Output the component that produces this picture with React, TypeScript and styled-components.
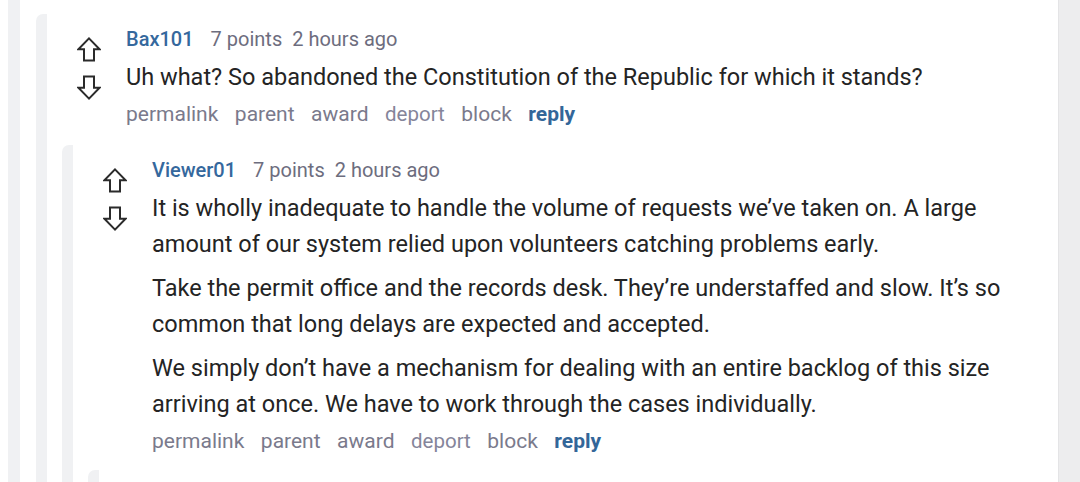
import styled, { createGlobalStyle } from "styled-components";
import type { ReactNode } from "react";

const GlobalStyle = createGlobalStyle`
  html, body {
    margin: 0;
    padding: 0;
    background: #ededee;
    font-family: Roboto, "Liberation Sans", Arial, sans-serif;
  }
  * { box-sizing: border-box; }
`;

const Panel = styled.div`
  width: 1059px;
  height: 482px;
  overflow: hidden;
  background: #ffffff;
  border-right: 1px solid #e4e4e6;
  padding: 0 34px 0 8px;
  display: flex;
`;

const Rail = styled.div<{ $width: number; $round?: boolean }>`
  flex: 0 0 ${(p) => p.$width}px;
  background: #f0f1f3;
  border-top-left-radius: ${(p) => (p.$round ? "7px" : "0")};
`;

const ThreadBody = styled.div`
  flex: 1;
  padding-left: 16px;
  padding-top: 14px;
`;

const CommentBox = styled.div<{ $top: number }>`
  display: flex;
  margin-top: ${(p) => p.$top}px;
`;

const CommentInner = styled.div`
  flex: 1;
  padding-left: 15px;
  padding-bottom: 16px;
`;

// a nested reply below the fold: only its rail shows
const ReplyStub = styled.div`
  flex: 1;
  height: 60px;
`;

const CommentRow = styled.div`
  display: flex;
  padding-left: 15px;
  padding-top: 12px;
`;

const Votes = styled.div`
  flex: 0 0 24px;
  margin-right: 25px;
  padding-top: 11px;
  display: flex;
  flex-direction: column;
  align-items: center;
  gap: 13px;
  color: #2b2b2b;
`;

const CommentMain = styled.div`
  flex: 1;
  min-width: 0;
`;

const Header = styled.div`
  display: flex;
  align-items: baseline;
  font-size: 20px;
  line-height: 26px;
  margin-bottom: 7px;
`;

const Author = styled.a`
  color: #35689d;
  font-weight: 500;
  margin-right: 17px;
`;

const Meta = styled.span<{ $gap?: number }>`
  color: #6d6d7e;
  margin-right: ${(p) => p.$gap ?? 0}px;
`;

const Body = styled.div`
  font-size: 23.5px;
  line-height: 36px;
  color: #242424;
`;

const Para = styled.p`
  margin: 0 0 8px 0;
  &:last-child { margin-bottom: 0; }
`;

const Actions = styled.div`
  display: flex;
  align-items: baseline;
  margin-top: 4px;
  font-size: 21px;
  line-height: 30px;
`;

const Action = styled.a<{ $muted?: boolean; $primary?: boolean }>`
  margin-right: 16.5px;
  color: ${(p) => (p.$primary ? "#336699" : p.$muted ? "#85859a" : "#7a7a8c")};
  font-size: ${(p) => (p.$muted ? "20.5px" : "21px")};
  font-weight: ${(p) => (p.$primary ? 700 : 400)};
  cursor: pointer;
`;

const Arrow = ({ down }: { down?: boolean }) => (
  <svg width="24" height="25" viewBox="0 0 24 25" fill="none" stroke="currentColor"
    strokeWidth="2" strokeLinejoin="miter"
    style={down ? { transform: "rotate(180deg)" } : undefined}>
    <path d="M12 1.4 L22.6 12.2 H17 V23.6 H7 V12.2 H1.4 Z" />
  </svg>
);

type CommentProps = {
  author: string;
  points: number;
  age: string;
  paragraphs: string[];
  top: number;
  children?: ReactNode;
};

const Comment = ({ author, points, age, paragraphs, top, children }: CommentProps) => (
  <CommentBox $top={top}>
    <Rail $width={11} $round />
    <CommentInner>
      <CommentRow>
        <Votes>
          <Arrow />
          <Arrow down />
        </Votes>
        <CommentMain>
          <Header>
            <Author>{author}</Author>
            <Meta $gap={10}>{points} points</Meta>
            <Meta>{age}</Meta>
          </Header>
          <Body>
            {paragraphs.map((t, i) => (
              <Para key={i}>{t}</Para>
            ))}
          </Body>
          <Actions>
            <Action>permalink</Action>
            <Action>parent</Action>
            <Action>award</Action>
            <Action $muted>deport</Action>
            <Action>block</Action>
            <Action $primary>reply</Action>
          </Actions>
        </CommentMain>
      </CommentRow>
      {children}
    </CommentInner>
  </CommentBox>
);

export default function App() {
  return (
    <>
      <GlobalStyle />
      <Panel>
        <Rail $width={12} />
        <ThreadBody>
          <Comment
            top={0}
            author="Bax101"
            points={7}
            age="2 hours ago"
            paragraphs={[
              "Uh what? So abandoned the Constitution of the Republic for which it stands?",
            ]}
          >
            <Comment
              top={16}
              author="Viewer01"
              points={7}
              age="2 hours ago"
              paragraphs={[
                "It is wholly inadequate to handle the volume of requests we’ve taken on. A large amount of our system relied upon volunteers catching problems early.",
                "Take the permit office and the records desk. They’re understaffed and slow. It’s so common that long delays are expected and accepted.",
                "We simply don’t have a mechanism for dealing with an entire backlog of this size arriving at once. We have to work through the cases individually.",
              ]}
            >
              <CommentBox $top={14}>
                <Rail $width={11} $round />
                <ReplyStub />
              </CommentBox>
            </Comment>
          </Comment>
        </ThreadBody>
      </Panel>
    </>
  );
}
